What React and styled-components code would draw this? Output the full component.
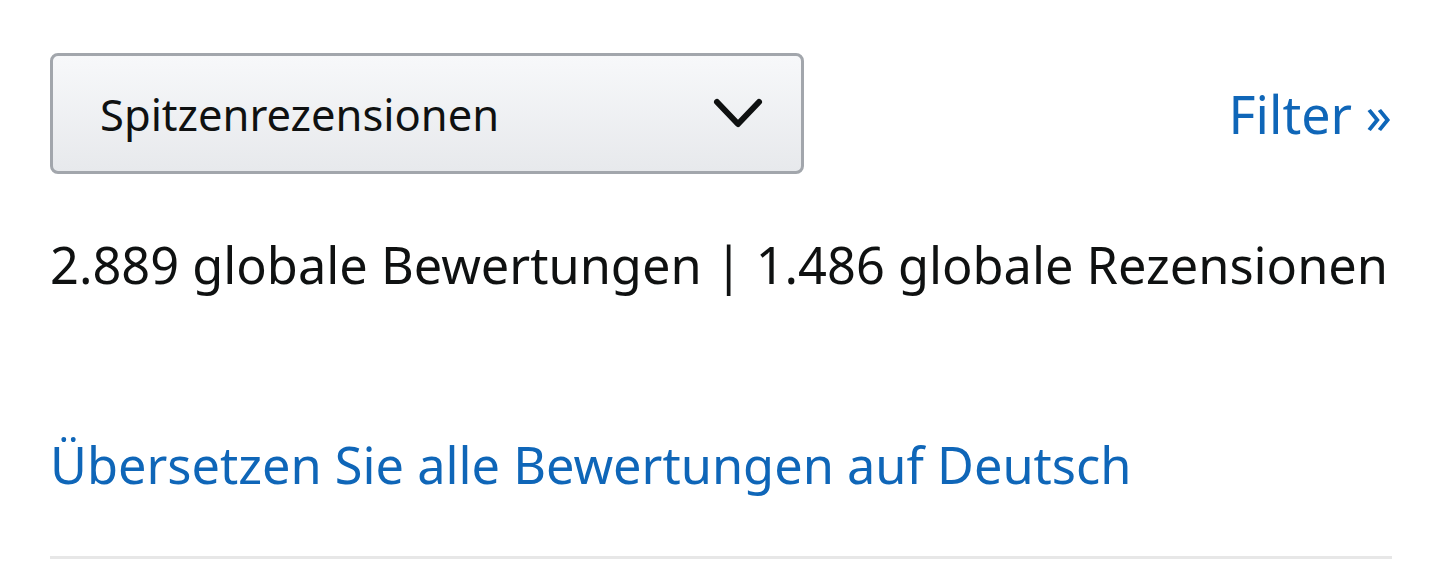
import React from "react";
import styled, { createGlobalStyle } from "styled-components";

const GlobalStyle = createGlobalStyle`
  html, body {
    margin: 0;
    padding: 0;
    background: #ffffff;
  }
  body {
    font-family: "Noto Sans", "Open Sans", sans-serif;
    color: #0f1111;
  }
`;

const Page = styled.div`
  width: 1440px;
  height: 565px;
  box-sizing: border-box;
  padding: 53px 48px 0 50px;
  overflow: hidden;
`;

const TopRow = styled.div`
  display: flex;
  align-items: center;
  justify-content: space-between;
`;

const Dropdown = styled.button`
  width: 754px;
  height: 121px;
  box-sizing: border-box;
  display: flex;
  align-items: center;
  justify-content: space-between;
  padding: 0 38px 0 47px;
  border: 3px solid #a2a6ac;
  border-radius: 8px;
  background: linear-gradient(to bottom, #f7f8fa, #e7e9ec);
  font-family: inherit;
  font-size: 43.5px;
  color: #0f1111;
  cursor: pointer;
`;

const Link = styled.a`
  color: #0f66b8;
  text-decoration: none;
  font-size: ${(p) => p.size || 50.5}px;
  cursor: pointer;
`;

const Summary = styled.div`
  margin-top: 60px;
  font-size: 50.5px;
  line-height: 62px;
  white-space: nowrap;
`;

const TranslateRow = styled.div`
  margin-top: 138px;
  font-size: 50.5px;
  line-height: 62px;
  white-space: nowrap;
`;

const Divider = styled.hr`
  margin: 60px 0 0;
  border: none;
  height: 3px;
  background: #e7e7e7;
`;

const Chevron = () => (
  <svg width="50" height="34" viewBox="0 0 50 34">
    <path
      d="M4 5 L25 27 L46 5"
      fill="none"
      stroke="#0f1111"
      strokeWidth="6"
      strokeLinecap="round"
      strokeLinejoin="round"
    />
  </svg>
);

const App = () => {
  return (
    <>
      <GlobalStyle />
      <Page>
        <TopRow>
          <Dropdown>
            <span>Spitzenrezensionen</span>
            <Chevron />
          </Dropdown>
          <Link size={52}>Filter »</Link>
        </TopRow>
        <Summary>2.889 globale Bewertungen | 1.486 globale Rezensionen</Summary>
        <TranslateRow>
          <Link>Übersetzen Sie alle Bewertungen auf Deutsch</Link>
        </TranslateRow>
        <Divider />
      </Page>
    </>
  );
};

export default App;
